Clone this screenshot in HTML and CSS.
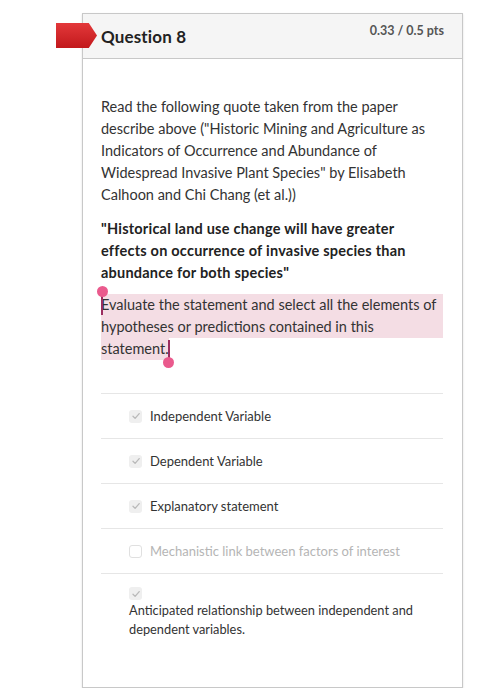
FILE: index.html
```html
<!DOCTYPE html>
<html>
<head>
<meta charset="utf-8">
<link rel="stylesheet" href="styles.css">
</head>
<body>
<div class="card">
  <div class="flag"></div>
  <div class="header">
    <span class="title">Question 8</span>
    <span class="pts">0.33 / 0.5 pts</span>
  </div>
  <div class="body">
    <p class="para">Read the following quote taken from the paper<br>describe above ("Historic Mining and Agriculture as<br>Indicators of Occurrence and Abundance of<br>Widespread Invasive Plant Species" by Elisabeth<br>Calhoon and Chi Chang (et al.))</p>
    <p class="para bold">"Historical land use change will have greater<br>effects on occurrence of invasive species than<br>abundance for both species"</p>
    <p class="para sel">Evaluate the statement and select all the elements of<br>hypotheses or predictions contained in this<br><span class="sel-last">statement.<span class="handle end"></span></span><span class="handle start"></span></p>
    <ul class="options">
      <li class="opt"><span class="box on"><svg viewBox="0 0 12 12" width="12" height="12"><path d="M3 6.3 L5.1 8.4 L9.2 3.6" fill="none" stroke="#b9b9b9" stroke-width="1.3" stroke-linecap="round" stroke-linejoin="round"/></svg></span><span class="lbl">Independent Variable</span></li>
      <li class="opt"><span class="box on"><svg viewBox="0 0 12 12" width="12" height="12"><path d="M3 6.3 L5.1 8.4 L9.2 3.6" fill="none" stroke="#b9b9b9" stroke-width="1.3" stroke-linecap="round" stroke-linejoin="round"/></svg></span><span class="lbl">Dependent Variable</span></li>
      <li class="opt"><span class="box on"><svg viewBox="0 0 12 12" width="12" height="12"><path d="M3 6.3 L5.1 8.4 L9.2 3.6" fill="none" stroke="#b9b9b9" stroke-width="1.3" stroke-linecap="round" stroke-linejoin="round"/></svg></span><span class="lbl">Explanatory statement</span></li>
      <li class="opt off"><span class="box empty"></span><span class="lbl">Mechanistic link between factors of interest</span></li>
      <li class="opt stacked"><span class="box on"><svg viewBox="0 0 12 12" width="12" height="12"><path d="M3 6.3 L5.1 8.4 L9.2 3.6" fill="none" stroke="#b9b9b9" stroke-width="1.3" stroke-linecap="round" stroke-linejoin="round"/></svg></span><span class="lbl">Anticipated relationship between independent and<br>dependent variables.</span></li>
    </ul>
  </div>
</div>
</body>
</html>
```
FILE: styles.css
```css
* { box-sizing: border-box; }
body {
  margin: 0;
  background: #fff;
  font-family: Lato, "Open Sans", sans-serif;
  color: #2d2d2d;
}
.card {
  position: relative;
  margin: 13px 0 0 82px;
  width: 381px;
  height: 675px;
  border: 1px solid #c8c8c8;
  box-shadow: 0 1px 2px rgba(0,0,0,0.12);
  background: #fff;
}
.flag {
  position: absolute;
  left: -27px;
  top: 9px;
  width: 41px;
  height: 25px;
  background: linear-gradient(#e3383a, #c2191c);
  clip-path: polygon(0 0, 80% 0, 100% 50%, 80% 100%, 0 100%);
}
.header {
  height: 45px;
  background: #f5f5f5;
  border-bottom: 1px solid #c8c8c8;
  display: flex;
  justify-content: space-between;
  padding: 0 18px 0 18px;
}
.title {
  font-weight: 700;
  font-size: 17px;
  color: #222;
  line-height: 20px;
  margin-top: 13px;
  letter-spacing: 0.15px;
}
.pts {
  font-weight: 700;
  font-size: 12.5px;
  color: #555;
  line-height: 16px;
  margin-top: 9px;
}
.body {
  padding: 37px 19px 0 18px;
}
.para {
  margin: 0 0 12px;
  font-size: 14.5px;
  line-height: 22px;
  color: #333;
  white-space: nowrap;
}
.bold {
  font-weight: 700;
  color: #222;
  margin-bottom: 10px;
  letter-spacing: 0.22px;
}
.sel {
  position: relative;
  margin: 0;
  background: linear-gradient(#f4dde4, #f4dde4) top left / 100% 44px no-repeat;
}
.sel-last {
  position: relative;
  display: inline-block;
  background: #f4dde4;
  line-height: 22px;
}
.handle {
  position: absolute;
  width: 2px;
  background: #9c2d5f;
}
.handle::after {
  content: "";
  position: absolute;
  width: 11px;
  height: 11px;
  border-radius: 50%;
  background: #ea5a8d;
  left: -4.5px;
}
.handle.start { left: 0; top: -3px; height: 24px; }
.handle.start::after { top: -5px; }
.handle.end { right: -1px; top: 2px; height: 20px; }
.handle.end::after { bottom: -8px; }
.options {
  list-style: none;
  margin: 33px 0 0;
  padding: 0;
  border-top: 1px solid #e6e6e6;
}
.opt {
  display: flex;
  align-items: center;
  height: 45px;
  border-bottom: 1px solid #e6e6e6;
  padding-left: 28px;
  font-size: 13px;
  color: #333;
}
.opt:last-child { border-bottom: none; }
.box {
  width: 13px;
  height: 13px;
  border-radius: 3px;
  margin-right: 8px;
  display: flex;
  align-items: center;
  justify-content: center;
}
.box.on { background: #efefef; }
.box.empty { border: 1px solid #e0e0e0; background: #fff; }
.off .lbl { color: #b5b5b5; }
.stacked {
  display: block;
  height: auto;
  padding-top: 13px;
  padding-left: 28px;
}
.stacked .box { margin-bottom: 1px; }
.stacked .lbl { display: block; line-height: 19px; font-size: 12.8px; }
```
